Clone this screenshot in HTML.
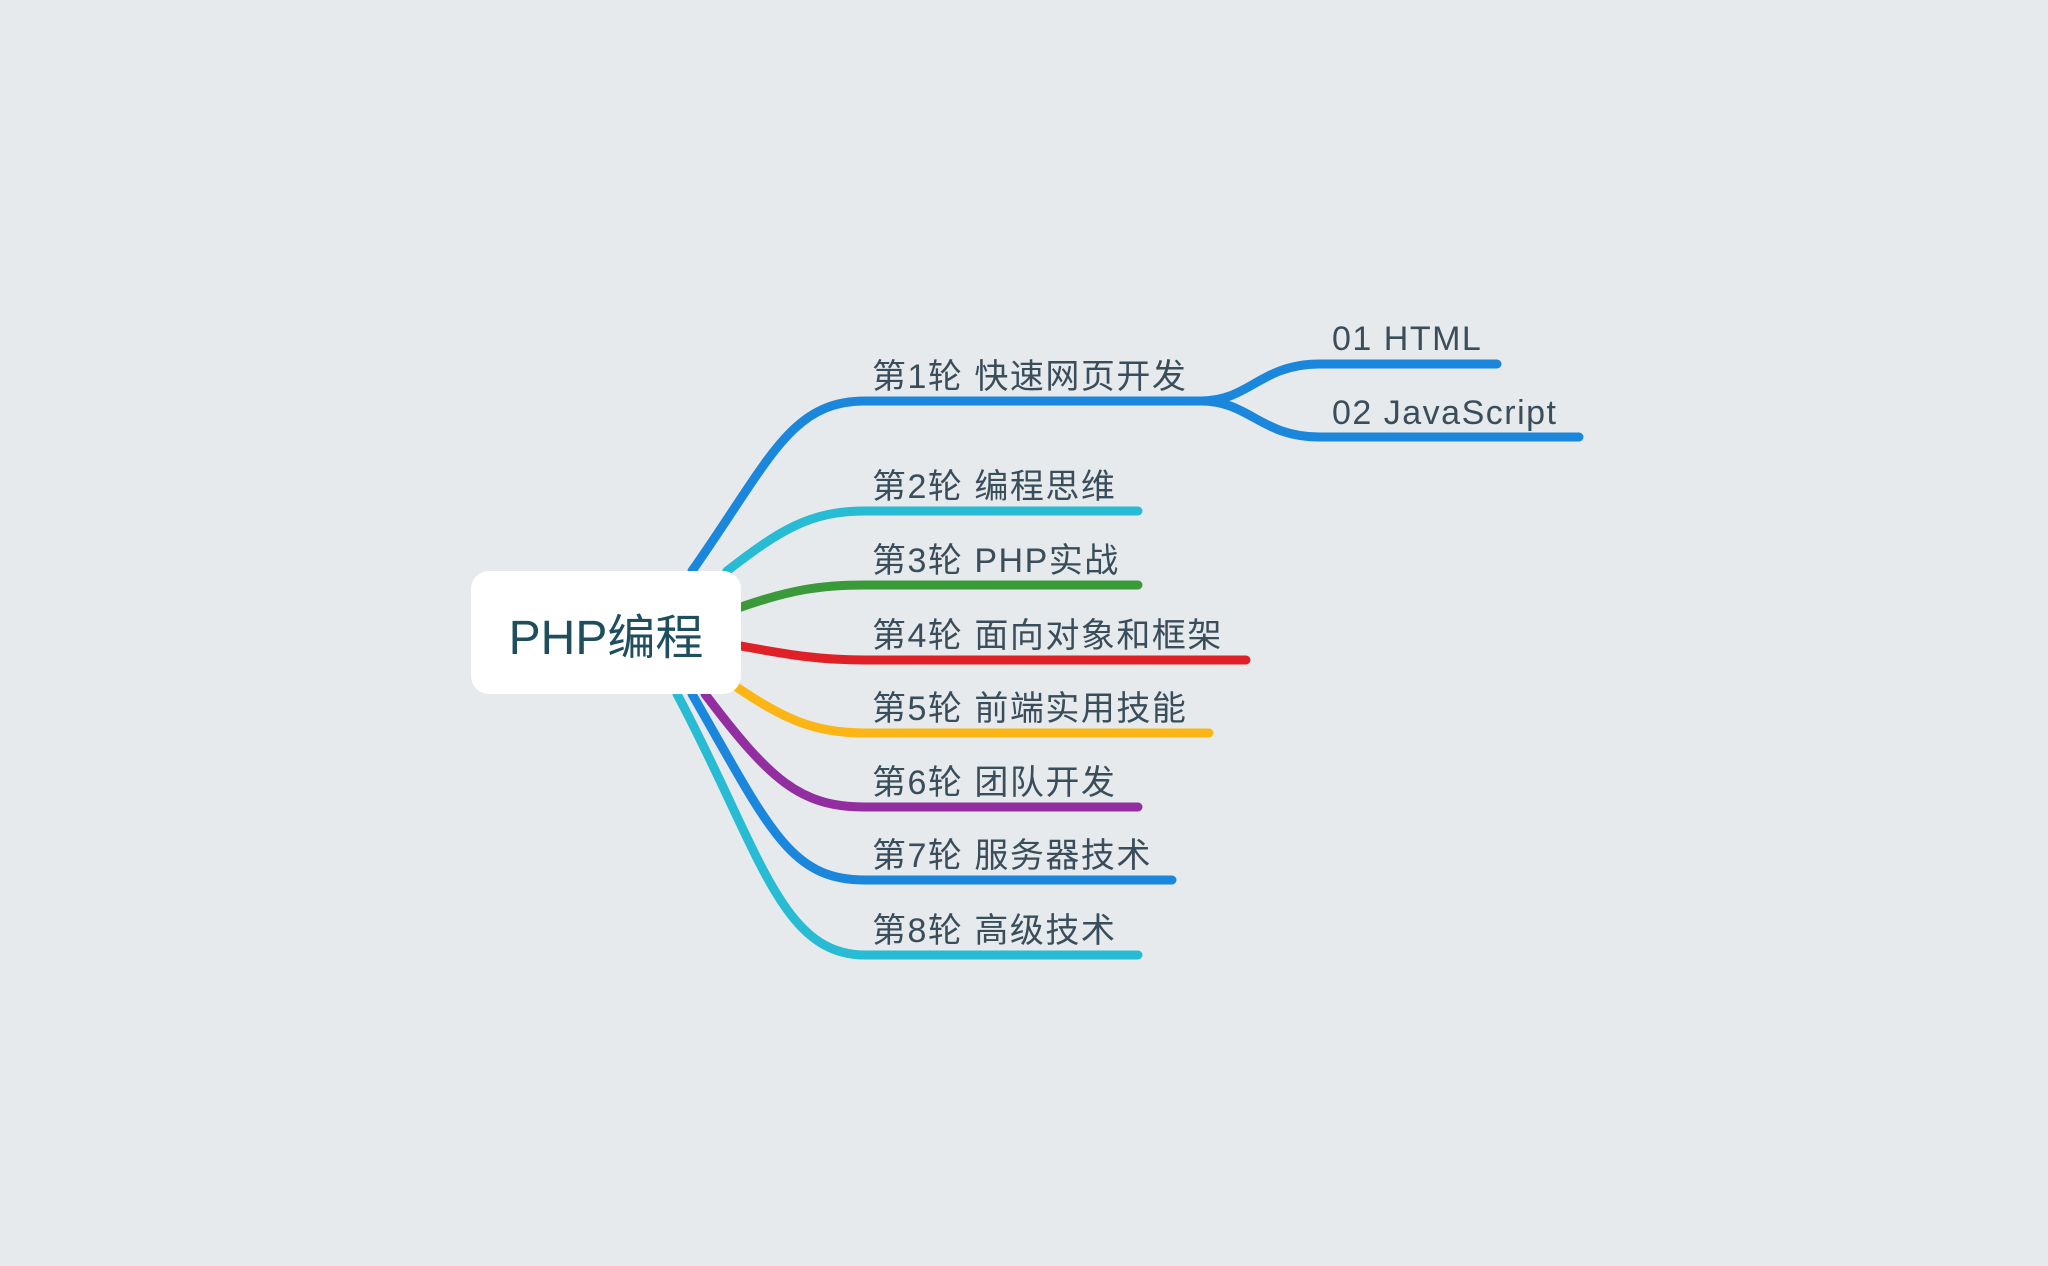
<!DOCTYPE html>
<html><head><meta charset="utf-8"><style>
html,body{margin:0;padding:0;background:#e6eaed;width:2048px;height:1266px;overflow:hidden}
svg{position:absolute;left:0;top:0}
.t{position:absolute;font-family:"Liberation Sans","Noto Sans CJK SC",sans-serif;font-size:34px;letter-spacing:1.5px;color:#3a4d5a;white-space:nowrap;line-height:40px}
.box{position:absolute;left:471px;top:571px;width:270px;height:123px;background:#fff;border-radius:18px;font-family:"Liberation Sans","Noto Sans CJK SC",sans-serif;font-size:48px;color:#1f4e5f;display:flex;align-items:center;justify-content:center}
</style></head><body>
<svg width="2048" height="1266" fill="none" stroke-width="9" stroke-linecap="round">
<path d="M692 571 C770 460 790 401 865 401 L1201 401" stroke="#1a87dd"/>
<path d="M1201 401 C1250 401 1260 364 1320 364 L1497 364" stroke="#1a87dd"/>
<path d="M1201 401 C1250 401 1260 437 1320 437 L1579 437" stroke="#1a87dd"/>
<path d="M727 571 C780 530 810 511 865 511 L1138 511" stroke="#27bcd4"/>
<path d="M741 607 C790 590 820 585 865 585 L1138 585" stroke="#3a9a3a"/>
<path d="M741 646 C790 655 820 660 865 660 L1246 660" stroke="#e02027"/>
<path d="M735 686 C785 720 815 733 865 733 L1209 733" stroke="#fbb515"/>
<path d="M705 694 C770 780 800 807 865 807 L1138 807" stroke="#922ea0"/>
<path d="M692 694 C770 830 790 880 865 880 L1172 880" stroke="#1a87dd"/>
<path d="M677 694 C760 850 780 955 865 955 L1138 955" stroke="#27bcd4"/>
</svg>
<div class="box">PHP编程</div>
<div class="t" style="left:872px;top:357px">第1轮 快速网页开发</div>
<div class="t" style="left:1332px;top:319px">01 HTML</div>
<div class="t" style="left:1332px;top:393px">02 JavaScript</div>
<div class="t" style="left:872px;top:467px">第2轮 编程思维</div>
<div class="t" style="left:872px;top:541px">第3轮 PHP实战</div>
<div class="t" style="left:872px;top:616px">第4轮 面向对象和框架</div>
<div class="t" style="left:872px;top:689px">第5轮 前端实用技能</div>
<div class="t" style="left:872px;top:763px">第6轮 团队开发</div>
<div class="t" style="left:872px;top:836px">第7轮 服务器技术</div>
<div class="t" style="left:872px;top:911px">第8轮 高级技术</div>
</body></html>
